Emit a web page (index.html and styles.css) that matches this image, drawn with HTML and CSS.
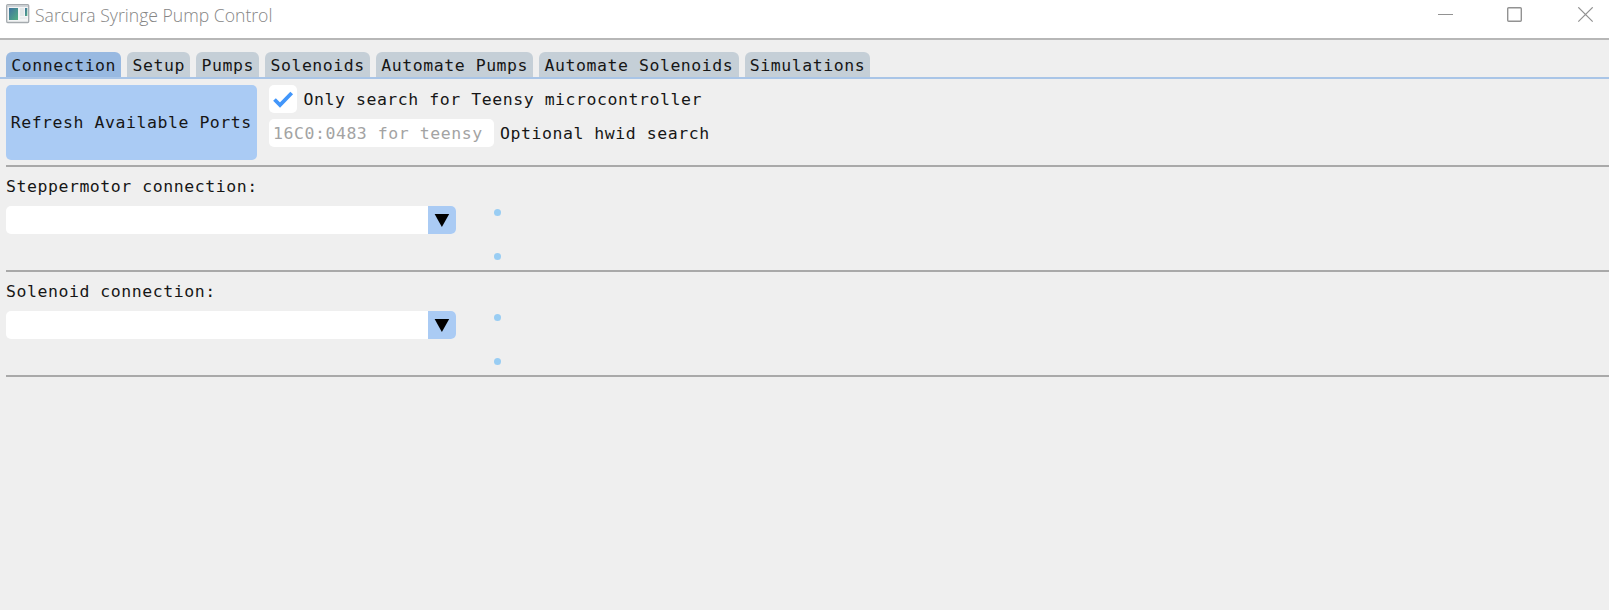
FILE: index.html
```html
<!DOCTYPE html>
<html lang="en">
<head>
<meta charset="utf-8">
<title>Sarcura Syringe Pump Control</title>
<link rel="stylesheet" href="styles.css">
</head>
<body>
<header class="titlebar">
  <svg class="app-icon" width="24" height="20" viewBox="0 0 24 20">
    <defs><linearGradient id="g" x1="0" y1="0" x2="1" y2="1"><stop offset="0" stop-color="#3f729f"/><stop offset="1" stop-color="#55b083"/></linearGradient></defs>
    <rect x=".7" y=".7" width="22" height="17.8" rx="1" fill="#f3f4f5" stroke="#a5aaae" stroke-width="1.3"/>
    <path d="M1 2h21" stroke="#c3c8cd" stroke-width="1.5"/>
    <rect x="3" y="4" width="9" height="12" fill="url(#g)"/>
    <rect x="14" y="4" width="4" height="8" fill="#e2e7e8"/>
    <rect x="19" y="4" width="2.3" height="8" fill="url(#g)"/>
    <path d="M14 14h7" stroke="#e1e4e6"/>
  </svg>
  <h1 class="title">Sarcura Syringe Pump Control</h1>
  <svg class="window-controls" width="157" height="16" viewBox="0 0 157 16" fill="none" stroke="#929292">
    <path d="M0 7.5h15"/>
    <rect x="69.7" y=".7" width="13.6" height="13.6" rx="1" stroke-width="1.4"/>
    <path d="M140.3.3l14.4 14.4M154.7.3l-14.4 14.4" stroke-width="1.2"/>
  </svg>
</header>
<nav class="tabs">
  <span class="tab active">Connection</span><span class="tab">Setup</span><span class="tab">Pumps</span><span class="tab">Solenoids</span><span class="tab">Automate Pumps</span><span class="tab">Automate Solenoids</span><span class="tab">Simulations</span>
</nav>
<main>
  <section class="search">
    <button class="refresh">Refresh Available Ports</button>
    <div class="options">
      <label class="option"><span class="checkbox"><svg width="28" height="28" viewBox="0 0 28 28"><path d="M5.5 14.5l5.5 5.5L22.7 8" fill="none" stroke="#4296fa" stroke-width="3.8"/></svg></span><span class="caption">Only search for Teensy microcontroller</span></label>
      <label class="option"><span class="hwid">16C0:0483 for teensy</span><span class="caption">Optional hwid search</span></label>
    </div>
  </section>
  <section class="port">
    <p class="port-label">Steppermotor connection:</p>
    <div class="port-row">
      <div class="combo"><span class="arrow"><svg width="28" height="28" viewBox="0 0 28 28"><path d="M6.6 8h14.6L13.9 21z"/></svg></span></div>
      <div class="status"><i class="dot"></i><i class="dot"></i></div>
    </div>
  </section>
  <section class="port">
    <p class="port-label">Solenoid connection:</p>
    <div class="port-row">
      <div class="combo"><span class="arrow"><svg width="28" height="28" viewBox="0 0 28 28"><path d="M6.6 8h14.6L13.9 21z"/></svg></span></div>
      <div class="status"><i class="dot"></i><i class="dot"></i></div>
    </div>
  </section>
</main>
</body>
</html>
```
FILE: styles.css
```css
* { box-sizing: border-box; }
body {
  margin: 0;
  height: 610px;
  overflow: hidden;
  background: #efefef;
  color: #161616;
  font: 16.5px/20px "DejaVu Sans Mono", monospace;
  letter-spacing: 0.55px;
  white-space: nowrap;
}
.titlebar {
  display: flex;
  align-items: flex-start;
  height: 40px;
  padding: 4px 16px 0 6px;
  background: #fff;
  border-bottom: 2px solid #b7b7b7;
}
.title {
  margin: -1px 0 0 5px;
  color: #858585;
  font: 300 17.6px/24px "Open Sans", sans-serif;
  letter-spacing: 0;
}
.window-controls { margin: 3px -2px 0 auto; }
.tabs {
  display: flex;
  gap: 6px;
  height: 39px;
  padding: 11.5px 0 0 6px;
  border-bottom: 2px solid #a9c5e7;
}
.tab {
  padding: 4px 5.25px;
  border-radius: 6px 6px 0 0;
  background: #c5cfd7;
}
.tab.active { background: #98b9e1; }
main { padding: 5.5px 0 0 6px; }
.search {
  display: flex;
  gap: 12.5px;
  height: 82.5px;
  border-bottom: 2px solid #a9a9a9;
}
.refresh {
  width: 250.5px;
  height: 75px;
  padding: 1px 0 0;
  border: 0;
  border-radius: 5px;
  background: #aacbf4;
  color: inherit;
  font: inherit;
  letter-spacing: inherit;
}
.options {
  display: flex;
  flex-direction: column;
  gap: 6.5px;
}
.option {
  display: flex;
  align-items: center;
  gap: 6.5px;
  height: 28px;
}
.caption { padding-top: 2px; }
.checkbox, .hwid {
  height: 28px;
  border-radius: 5px;
  background: #fff;
}
.checkbox { width: 28px; }
.hwid {
  width: 224.5px;
  padding: 5px 4px;
  color: #a3a3a3;
}
.port {
  height: 105px;
  padding-top: 10px;
  border-bottom: 2px solid #a9a9a9;
}
.port-label { margin: 0; height: 28.5px; }
.port-row { display: flex; }
.combo {
  display: flex;
  justify-content: flex-end;
  width: 450px;
  height: 28.5px;
  border-radius: 5px;
  background: #fff;
}
.arrow {
  width: 28.5px;
  border-radius: 0 5px 5px 0;
  background: #aacbf4;
}
.status {
  display: flex;
  flex-direction: column;
  gap: 37px;
  margin-left: 37.5px;
  padding-top: 3.5px;
}
.dot {
  width: 7px;
  height: 7px;
  border-radius: 50%;
  background: #99cdf3;
}
svg { display: block; flex: none; }
```
